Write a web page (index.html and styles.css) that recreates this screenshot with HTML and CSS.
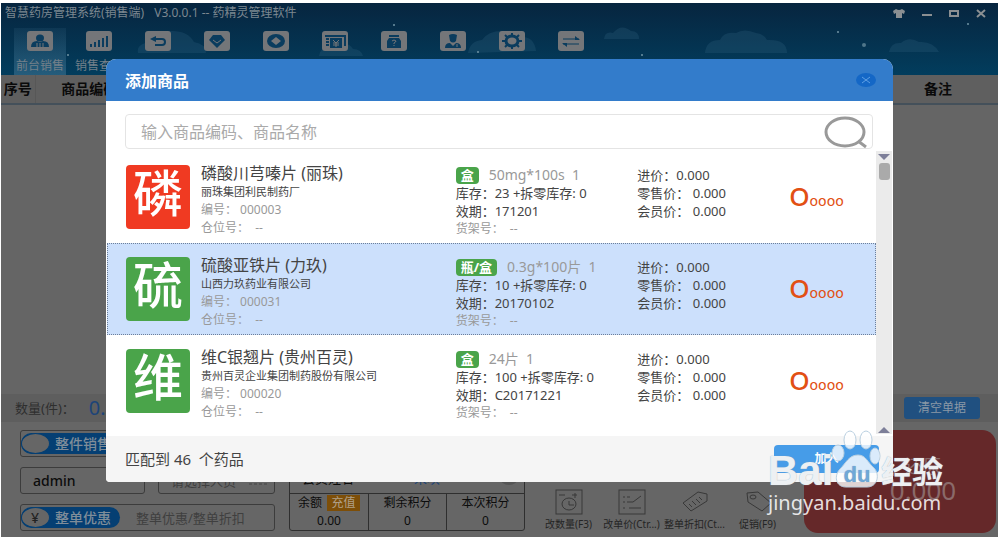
FILE: index.html
```
<!DOCTYPE html>
<html lang="zh-CN">
<head>
    <meta charset="UTF-8">
    <meta name="viewport" content="width=device-width, initial-scale=1.0">
    <title>智慧药房管理系统</title>
    <link rel="stylesheet" href="styles.css">
</head>
<body>
    <div class="app">
        <header class="header">
            <svg class="sky" viewBox="0 0 997 72" preserveAspectRatio="xMidYMin slice" aria-hidden="true">
                <g fill="#3d6f8c" opacity="0.22">
                    <path d="M137 50q-2-9 12-11 6-11 22-11t22 11q12 2 12 11z"/>
                    <path d="M318 53q2-11 14-10 14-6 20 3 8 0 10 7z"/>
                    <path d="M467 50q2-12 14-13 6-9 20-9 12 0 16 6 16-2 18 14z"/>
                    <path d="M603 36q1-8 9-6 8-10 18-2 8 0 8 8z"/>
                    <path d="M704 50q1-13 15-13 4-9 16-7 8-5 20 0 8 1 11 7 20-1 20 13z"/>
                    <path d="M888 49q2-10 12-9 8-7 18-1 14-1 20 10z"/>
                </g>
                <g fill="#6f93a3">
                    <circle cx="393" cy="22" r="1"/>
                    <circle cx="67" cy="52" r="1"/>
                    <circle cx="837" cy="29" r="1"/>
                    <circle cx="863" cy="42" r="2" opacity="0.7"/>
                    <circle cx="967" cy="21" r="1"/>
                    <circle cx="641" cy="52" r="1"/>
                    <circle cx="477" cy="49" r="1"/>
                </g>
            </svg>
            <div class="titlebar">
                <h1 class="app-title">智慧药房管理系统(销售端)<span class="version">V3.0.0.1 -- 药精灵管理软件</span></h1>
                <div class="window-buttons">
                    <button type="button" aria-label="皮肤">
                        <svg width="12" height="9" viewBox="0 0 12 9"><path d="M3 0q3 2 6 0l3 2-1 3-2-1v5H3V4L1 5 0 2z" fill="#8b8f92"/></svg>
                    </button>
                    <button type="button" aria-label="最小化">
                        <svg width="10" height="9" viewBox="0 0 10 9"><path d="M0 6h10" stroke="#8b8f92" stroke-width="2"/></svg>
                    </button>
                    <button type="button" aria-label="最大化">
                        <svg width="10" height="9" viewBox="0 0 10 9"><rect x="1" y="2" width="8" height="5" fill="none" stroke="#8b8f92" stroke-width="2"/></svg>
                    </button>
                    <button type="button" aria-label="关闭窗口">
                        <svg width="10" height="9" viewBox="0 0 10 9"><path d="M1 1l8 7M9 1L1 8" stroke="#8b8f92" stroke-width="2"/></svg>
                    </button>
                </div>
            </div>
            <nav class="toolbar">
                <a href="#" class="tool active">
                    <svg width="26" height="20" viewBox="0 0 26 20"><rect width="26" height="20" rx="3"/><ellipse class="ink" cx="13" cy="7" rx="4" ry="3.5"/><path class="ink" d="M4 16q0-6 6-6l3 1 3-1q6 0 6 6z"/><path class="line" d="M10 12v4M13 12v4M16 12v4"/></svg>
                    前台销售
                </a>
                <a href="#" class="tool">
                    <svg width="26" height="20" viewBox="0 0 26 20"><rect width="26" height="20" rx="3"/><path class="ink" d="M4 13h2v3H4zM8 11h2v5H8zM12 9h2v7h-2zM16 7h2v9h-2zM20 5h2v11h-2z"/></svg>
                    销售查询
                </a>
                <a href="#" class="tool" aria-label="退货">
                    <svg width="26" height="20" viewBox="0 0 26 20"><rect width="26" height="20" rx="3"/><path class="stroke" d="M8 8h9q3 0 3 3t-3 3h-7"/><path class="ink" d="M5 8l6-3v6z"/></svg>
                </a>
                <a href="#" class="tool" aria-label="会员">
                    <svg width="26" height="20" viewBox="0 0 26 20"><rect width="26" height="20" rx="3"/><path class="ink" d="M9 4h8l4 5-8 8-8-8z"/><path class="line" d="M9 9l4 3 4-3"/></svg>
                </a>
                <a href="#" class="tool" aria-label="钱箱">
                    <svg width="26" height="20" viewBox="0 0 26 20"><rect width="26" height="20" rx="3"/><ellipse class="ink" cx="13" cy="10" rx="9" ry="7"/><path d="M13 6l5 4-5 4-5-4z"/></svg>
                </a>
                <a href="#" class="tool" aria-label="票券">
                    <svg width="26" height="20" viewBox="0 0 26 20"><rect width="26" height="20" rx="3"/><path class="stroke" d="M3 5h20v10M4 8h3M4 11h3M4 14h3"/><path class="ink" d="M8 7h12v10H8z"/><path class="line" d="M11 9l3 3 3-3M14 12v4M11 12h6M11 14h6"/></svg>
                </a>
                <a href="#" class="tool" aria-label="帮助">
                    <svg width="26" height="20" viewBox="0 0 26 20"><rect width="26" height="20" rx="3"/><path class="ink" d="M8 4h10v2H8zM8 7h10l2 3v7H6v-7z"/><path class="line" d="M11 10q2-2 4 0 0 1-2 2v1M13 14v1"/></svg>
                </a>
                <a href="#" class="tool" aria-label="药师">
                    <svg width="26" height="20" viewBox="0 0 26 20"><rect width="26" height="20" rx="3"/><path class="ink" d="M9 4q4-2 8 0l-1 6q-3 3-6 0zM5 17q0-5 5-5l3 3 3-3q5 0 5 5z"/><path class="line" d="M17 13v3"/></svg>
                </a>
                <a href="#" class="tool" aria-label="设置">
                    <svg width="26" height="20" viewBox="0 0 26 20"><rect width="26" height="20" rx="3"/><path class="stroke" d="M13 2v3M13 15v3M3 10h4M19 10h4M6 4l3 3M20 4l-3 3M6 16l3-3M20 16l-3-3"/><ellipse class="ring" cx="13" cy="10" rx="6" ry="5"/></svg>
                </a>
                <a href="#" class="tool" aria-label="交接班">
                    <svg width="26" height="20" viewBox="0 0 26 20"><rect width="26" height="20" rx="3"/><path class="thin" d="M5 8h16M5 13h16"/><path class="ink" d="M17 5l5 4h-5zM9 16l-5-4h5z"/></svg>
                </a>
            </nav>
        </header>

        <main class="goods">
            <table class="goods-table">
                <thead>
                    <tr>
                        <th class="col-no">序号</th>
                        <th class="col-code">商品编码</th>
                        <th></th>
                        <th class="col-note">备注</th>
                    </tr>
                </thead>
            </table>
        </main>

        <div class="summary">
            <span>数量(件)：</span>
            <strong class="quantity">0.00</strong>
            <button type="button" class="clear-button">清空单据</button>
        </div>

        <section class="panel">
            <form class="fields">
                <div class="field wide">
                    <label class="switch"><input type="checkbox" checked>整件销售</label>
                </div>
                <div class="field">
                    <input type="text" class="operator" value="admin" aria-label="操作员">
                </div>
                <div class="field">
                    <input type="text" placeholder="请选择人员" aria-label="营业员">
                    <svg width="20" height="10" viewBox="0 0 20 10"><path d="M1 2h18M1 5h18M1 8h18" stroke="#444" stroke-dasharray="3 2"/></svg>
                </div>
                <div class="field wide">
                    <label class="switch yuan"><input type="checkbox" checked>整单优惠</label>
                    <input type="text" class="discount" placeholder="整单优惠/整单折扣" aria-label="折扣">
                </div>
            </form>

            <div class="member">
                <div class="member-row"></div>
                <div class="member-row">
                    <span>会员姓名</span>
                    <a href="#">未填</a>
                    <i class="member-dot"></i>
                </div>
                <div class="member-points">
                    <div><span>余额 <button type="button" class="recharge">充值</button></span><b>0.00</b></div>
                    <div><span>剩余积分</span><b>0</b></div>
                    <div><span>本次积分</span><b>0</b></div>
                </div>
            </div>

            <div class="shortcuts">
                <button type="button">
                    <svg width="28" height="26" viewBox="0 0 28 26"><rect x="1" y="1" width="26" height="24"/><path d="M4 6h6M17 6h5M20 4v5M14 12v4h5"/><ellipse cx="14" cy="15" rx="7" ry="6"/></svg>
                    改数量(F3)
                </button>
                <button type="button">
                    <svg width="28" height="26" viewBox="0 0 28 26"><rect x="1" y="1" width="26" height="24"/><path d="M5 8h2M9 8h3M5 13h2M9 13h6l8-6M5 19h2M11 19h12"/></svg>
                    改单价(Ctr...)
                </button>
                <button type="button">
                    <svg width="28" height="26" viewBox="0 0 28 26"><path d="M2 14L17 3l9 2v7L10 22z"/><path d="M8 15l3 3M11 12l4 4M15 10l4 4M18 8l3 3"/></svg>
                    整单折扣(Ct...
                </button>
                <button type="button">
                    <svg width="28" height="26" viewBox="0 0 28 26"><path d="M3 4l11-1 13 11-9 8L4 13z"/><ellipse cx="9" cy="8" rx="3" ry="2"/></svg>
                    促销(F9)
                </button>
            </div>

            <div class="total-card">
                <span>还原</span>
                <strong>0.000</strong>
            </div>
        </section>
    </div>

    <div class="modal" role="dialog" aria-labelledby="modalTitle">
        <div class="modal-header">
            <h2 id="modalTitle">添加商品</h2>
            <button type="button" class="close" aria-label="关闭">
                <svg width="20" height="14" viewBox="0 0 20 14"><path d="M6 4l8 6M14 4l-8 6" stroke="#5fa0e4"/></svg>
            </button>
        </div>

        <div class="search">
            <input type="text" placeholder="输入商品编码、商品名称" aria-label="搜索商品">
            <svg width="44" height="32" viewBox="0 0 44 32"><ellipse cx="22" cy="16" rx="19" ry="14"/><path d="M35 25l8 6"/></svg>
        </div>

        <div class="results">
            <ul class="list">
                <li class="item">
                    <div class="tile red">磷</div>
                    <div class="info">
                        <h3>磷酸川芎嗪片 (丽珠)</h3>
                        <p class="maker">丽珠集团利民制药厂</p>
                        <p class="muted">编号： 000003</p>
                        <p class="muted">仓位号：&nbsp; --</p>
                    </div>
                    <div class="stock">
                        <p class="spec"><span class="unit">盒</span>50mg*100s&nbsp; 1</p>
                        <p>库存：23 +拆零库存: 0</p>
                        <p>效期：171201</p>
                        <p class="muted">货架号：&nbsp; --</p>
                    </div>
                    <div class="prices">
                        <p>进价：0.000</p>
                        <p>零售价： 0.000</p>
                        <p>会员价： 0.000</p>
                    </div>
                    <div class="amount">O<small>oooo</small></div>
                </li>
                <li class="item selected">
                    <div class="tile">硫</div>
                    <div class="info">
                        <h3>硫酸亚铁片 (力玖)</h3>
                        <p class="maker">山西力玖药业有限公司</p>
                        <p class="muted">编号： 000031</p>
                        <p class="muted">仓位号：&nbsp; --</p>
                    </div>
                    <div class="stock">
                        <p class="spec"><span class="unit">瓶/盒</span>0.3g*100片&nbsp; 1</p>
                        <p>库存：10 +拆零库存: 0</p>
                        <p>效期：20170102</p>
                        <p class="muted">货架号：&nbsp; --</p>
                    </div>
                    <div class="prices">
                        <p>进价：0.000</p>
                        <p>零售价： 0.000</p>
                        <p>会员价： 0.000</p>
                    </div>
                    <div class="amount">O<small>oooo</small></div>
                </li>
                <li class="item">
                    <div class="tile">维</div>
                    <div class="info">
                        <h3>维C银翘片 (贵州百灵)</h3>
                        <p class="maker">贵州百灵企业集团制药股份有限公司</p>
                        <p class="muted">编号： 000020</p>
                        <p class="muted">仓位号：&nbsp; --</p>
                    </div>
                    <div class="stock">
                        <p class="spec"><span class="unit">盒</span>24片&nbsp; 1</p>
                        <p>库存：100 +拆零库存: 0</p>
                        <p>效期：C20171221</p>
                        <p class="muted">货架号：&nbsp; --</p>
                    </div>
                    <div class="prices">
                        <p>进价：0.000</p>
                        <p>零售价： 0.000</p>
                        <p>会员价： 0.000</p>
                    </div>
                    <div class="amount">O<small>oooo</small></div>
                </li>
            </ul>
            <div class="scrollbar">
                <i class="arrow down"></i>
                <i class="thumb"></i>
                <i class="arrow up"></i>
            </div>
        </div>

        <div class="modal-footer">
            <span>匹配到 46 &nbsp;个药品</span>
            <button type="button" class="add-button">加入</button>
        </div>
    </div>

    <div class="watermark">
        <div class="brand">
            <span class="latin">Bai</span>
            <svg width="48" height="58" viewBox="0 0 48 58">
                <g fill="#fff" fill-opacity="0.8" stroke="#b9cfe0">
                    <ellipse cx="5" cy="22" rx="6" ry="8"/>
                    <ellipse cx="17" cy="9" rx="6" ry="9"/>
                    <ellipse cx="33" cy="9" rx="6" ry="9"/>
                    <ellipse cx="42" cy="25" rx="5" ry="8"/>
                    <path d="M25 24c8 0 10 8 16 13 6 6 4 19-7 19H13C2 56 1 44 7 38c6-6 9-14 18-14z"/>
                </g>
                <text x="24" y="51" text-anchor="middle">du</text>
            </svg>
            <span class="cjk">经验</span>
        </div>
        <div class="site">jingyan.baidu.com</div>
    </div>
</body>
</html>
```
FILE: styles.css
```
* {
    box-sizing: border-box;
}

body {
    position: relative;
    display: flex;
    flex-direction: column;
    min-height: 100vh;
    margin: 0;
    padding: 3px 2px 1px 1px;
    background: #fff;
    font-family: 'Noto Sans', 'Noto Sans CJK SC', sans-serif;
    font-size: 13px;
    line-height: 18px;
    color: #444;
}

h1, h2, h3, p, ul {
    margin: 0;
    padding: 0;
}

button, input {
    font: inherit;
    color: inherit;
    border: none;
    background: none;
    padding: 0;
    margin: 0;
}

a {
    color: inherit;
    text-decoration: none;
}

svg {
    flex: none;
    overflow: visible;
}

.app {
    flex: 1;
    display: flex;
    flex-direction: column;
    background: #656565;
}

/* header */
.header {
    position: relative;
    height: 72px;
    background: linear-gradient(#07253f, #023d5d);
    overflow: hidden;
}

.sky {
    position: absolute;
    top: 0;
    left: 0;
    width: 100%;
    height: 100%;
}

.titlebar {
    position: relative;
    display: flex;
    justify-content: space-between;
    align-items: center;
    height: 20px;
    padding: 0 12px 0 4px;
}

.app-title {
    font-size: 12px;
    font-weight: 400;
    line-height: 18px;
    color: #7c8790;
}

.version {
    margin-left: 10px;
}

.window-buttons {
    display: flex;
    gap: 17px;
}

.window-buttons button {
    display: flex;
}

.toolbar {
    position: relative;
    display: flex;
    gap: 7px;
    padding: 5px 0 0 13px;
}

.tool {
    display: flex;
    flex-direction: column;
    align-items: center;
    gap: 6px;
    width: 52px;
    height: 47px;
    padding-top: 3px;
    font-size: 12px;
    line-height: 18px;
    color: #74808a;
    white-space: nowrap;
}

.tool.active {
    background: linear-gradient(rgba(90, 140, 170, 0.1), rgba(90, 140, 170, 0.4));
}

.tool svg {
    fill: #747679;
}

.tool .ink {
    fill: #0a3c5e;
}

.tool .stroke {
    fill: none;
    stroke: #0a3c5e;
    stroke-width: 2;
}

.tool .thin {
    stroke: #0a3c5e;
}

.tool .line {
    fill: none;
    stroke: #747679;
}

.tool .ring {
    fill: none;
    stroke: #0a3c5e;
    stroke-width: 3;
}

/* goods table */
.goods {
    flex: 1;
}

.goods-table {
    width: 100%;
    table-layout: fixed;
    border-collapse: collapse;
}

.goods-table th {
    height: 29px;
    padding: 0;
    background: #5f5f5f;
    border-bottom: 2px solid #44505a;
    font-size: 14px;
    font-weight: 700;
    color: #0a0a0a;
}

.goods-table .col-no {
    width: 34px;
    border-right: 1px solid #575757;
}

.goods-table .col-code {
    width: 108px;
}

.goods-table .col-note {
    width: 120px;
}

/* summary bar */
.summary {
    display: flex;
    align-items: center;
    height: 28px;
    padding: 0 18px 0 14px;
    background: #5e5e5e;
    color: #2e2e2e;
}

.quantity {
    margin-left: 14px;
    font-size: 20px;
    font-weight: 400;
    color: #1d4478;
}

.clear-button {
    width: 76px;
    height: 22px;
    margin-left: auto;
    border-radius: 3px;
    background: #205080;
    font-size: 12px;
    color: #8a98a6;
}

/* bottom panel */
.panel {
    display: flex;
    padding: 8px 2px 4px 19px;
    height: 115px;
    background: #666;
}

.fields {
    display: grid;
    grid-template-columns: 125px 117px;
    grid-auto-rows: 27px;
    column-gap: 13px;
    row-gap: 10px;
}

.field {
    display: flex;
    align-items: center;
    border: 1px solid #3c3c3c;
    border-radius: 3px;
    padding: 0 6px 0 12px;
}

.field.wide {
    grid-column: span 2;
    padding: 0;
}

.field input[type="text"] {
    flex: 1;
    min-width: 0;
}

.field input::placeholder {
    color: #3f3f3f;
}

.field .operator {
    font-size: 14px;
    font-weight: 500;
    color: #0c0c0c;
}

.field .discount {
    padding-left: 16px;
}

.switch {
    position: relative;
    display: flex;
    align-items: center;
    gap: 5px;
    width: 99px;
    height: 21px;
    border-radius: 11px;
    background: #053f73;
    font-size: 14px;
    font-weight: 500;
    color: #7f8d99;
}

.switch input {
    appearance: none;
    width: 29px;
    height: 21px;
    border: 1px solid #053f73;
    border-radius: 50%;
    background: #666;
}

.switch.yuan::before {
    content: "¥";
    position: absolute;
    left: 10px;
    color: #222;
}

.member {
    display: flex;
    flex-direction: column;
    width: 236px;
    height: 101px;
    margin-left: 14px;
    border: 1px solid #2f2f2f;
    border-radius: 3px;
    color: #0c0c0c;
}

.member-row {
    display: flex;
    justify-content: space-between;
    align-items: center;
    height: 32px;
    padding: 0 6px 0 12px;
    border-bottom: 1px solid #2f2f2f;
}

.member-row a {
    color: #1d4478;
}

.member-dot {
    width: 18px;
    height: 14px;
    border-radius: 50%;
    background: #555;
}

.member-points {
    flex: 1;
    display: grid;
    grid-template-columns: repeat(3, 1fr);
    text-align: center;
    font-size: 12px;
    line-height: 18px;
}

.member-points div + div {
    border-left: 1px solid #2f2f2f;
}

.member-points span,
.member-points b {
    display: block;
    font-weight: 400;
}

.recharge {
    width: 33px;
    margin-left: 2px;
    background: #7d4e08;
    line-height: 16px;
    color: #b0a089;
}

.shortcuts {
    display: flex;
    align-items: flex-end;
    margin-left: 12px;
}

.shortcuts button {
    display: flex;
    flex-direction: column;
    align-items: center;
    width: 63px;
    font-size: 10px;
    line-height: 18px;
    color: #242424;
    white-space: nowrap;
}

.shortcuts svg {
    fill: none;
    stroke: #383838;
}

.total-card {
    display: flex;
    flex-direction: column;
    align-items: center;
    width: 192px;
    margin-left: auto;
    padding: 24px 0 0 46px;
    border-radius: 14px;
    background: #652829;
    font-size: 18px;
    line-height: 24px;
    color: #8a6a6a;
}

.total-card strong {
    font-size: 26px;
    font-weight: 400;
}

/* modal */
.modal {
    position: absolute;
    top: 59px;
    left: 106px;
    right: 107px;
    border-radius: 10px 10px 4px 4px;
    background: #fff;
    overflow: hidden;
}

.modal-header {
    display: flex;
    justify-content: space-between;
    align-items: center;
    height: 42px;
    padding: 0 17px 0 19px;
    background: #337ccb;
}

.modal-header h2 {
    padding-top: 2px;
    font-size: 16px;
    font-weight: 700;
    color: #fff;
}

.close {
    display: flex;
    border-radius: 50%;
    background: #1467c6;
}

.search {
    display: flex;
    align-items: center;
    height: 35px;
    margin: 13px 20px 2px 19px;
    padding: 0 5px 0 15px;
    border: 1px solid #e4e4e4;
    border-radius: 4px;
}

.search input {
    flex: 1;
    min-width: 0;
    font-size: 16px;
    color: #444;
    outline: none;
}

.search input::placeholder {
    color: #aaa;
}

.search svg {
    fill: none;
    stroke: #999;
    stroke-width: 3;
}

.results {
    display: flex;
    padding: 0 1px 2px;
}

.list {
    flex: 1;
    list-style: none;
    padding-bottom: 7px;
}

.item {
    display: grid;
    grid-template-columns: 64px 255fr 182fr 155fr 94fr;
    height: 92px;
    padding-left: 18px;
    border: 1px solid transparent;
    white-space: nowrap;
}

.item.selected {
    background: #cce0fc;
    border: 1px dotted #6d7f99;
}

.tile {
    height: 64px;
    margin-top: 13px;
    border-radius: 4px;
    background: #4aa44a;
    font-size: 50px;
    font-weight: 500;
    line-height: 56px;
    text-align: center;
    color: #fff;
}

.tile.red {
    background: #f03a22;
}

.info {
    padding: 11px 0 0 11px;
}

.info h3 {
    font-size: 16px;
    font-weight: 400;
    line-height: 20px;
}

.info .maker {
    font-size: 11px;
}

.muted {
    font-size: 12px;
    color: #999;
}

.stock {
    padding: 14px 0 0 11px;
}

.prices {
    padding: 14px 0 0 11px;
}

.spec {
    display: flex;
    align-items: center;
    gap: 10px;
    font-size: 14px;
    color: #999;
}

.unit {
    padding: 0 5px;
    border-radius: 4px;
    background: #4aa44a;
    font-size: 13px;
    font-weight: 700;
    line-height: 17px;
    color: #fff;
}

.amount {
    padding: 26px 0 0 8px;
    font-size: 26px;
    font-weight: 500;
    line-height: 36px;
    color: #e25014;
}

.amount small {
    font-family: 'DejaVu Sans', sans-serif;
    font-size: 14px;
    font-weight: 400;
}

.scrollbar {
    display: flex;
    flex-direction: column;
    align-items: center;
    width: 16px;
    padding: 3px 0 1px;
    background: #ebebeb;
}

.arrow {
    border: 6px solid transparent;
}

.arrow.down {
    border-top-color: #7d7f99;
    border-bottom: none;
}

.arrow.up {
    margin-top: auto;
    border-bottom-color: #7d7f99;
    border-top: none;
}

.thumb {
    width: 11px;
    height: 17px;
    margin-top: 3px;
    border-radius: 3px;
    background: #aaa;
}

.modal-footer {
    display: flex;
    justify-content: space-between;
    align-items: center;
    height: 46px;
    padding: 0 14px 0 19px;
    background: #f5f5f5;
    font-size: 15px;
}

.add-button {
    width: 105px;
    height: 28px;
    border-radius: 4px;
    background: #469ce8;
    font-size: 12px;
    font-weight: 700;
    color: #fff;
}

/* watermark */
.watermark {
    position: absolute;
    right: 54px;
    bottom: 21px;
    width: 178px;
    color: rgba(255, 255, 255, 0.85);
    white-space: nowrap;
}

.brand {
    display: flex;
    align-items: flex-end;
    height: 58px;
    font-weight: 700;
    line-height: 36px;
    text-shadow: 0 0 1px #8fa3b3;
}

.brand .latin {
    font-family: 'Liberation Sans', sans-serif;
    font-size: 42px;
}

.brand .cjk {
    font-size: 31px;
}

.brand text {
    font-family: 'Liberation Sans', sans-serif;
    font-size: 22px;
    font-weight: 700;
    fill: #6fa8d8;
}

.site {
    font-size: 20px;
    line-height: 28px;
}
```
